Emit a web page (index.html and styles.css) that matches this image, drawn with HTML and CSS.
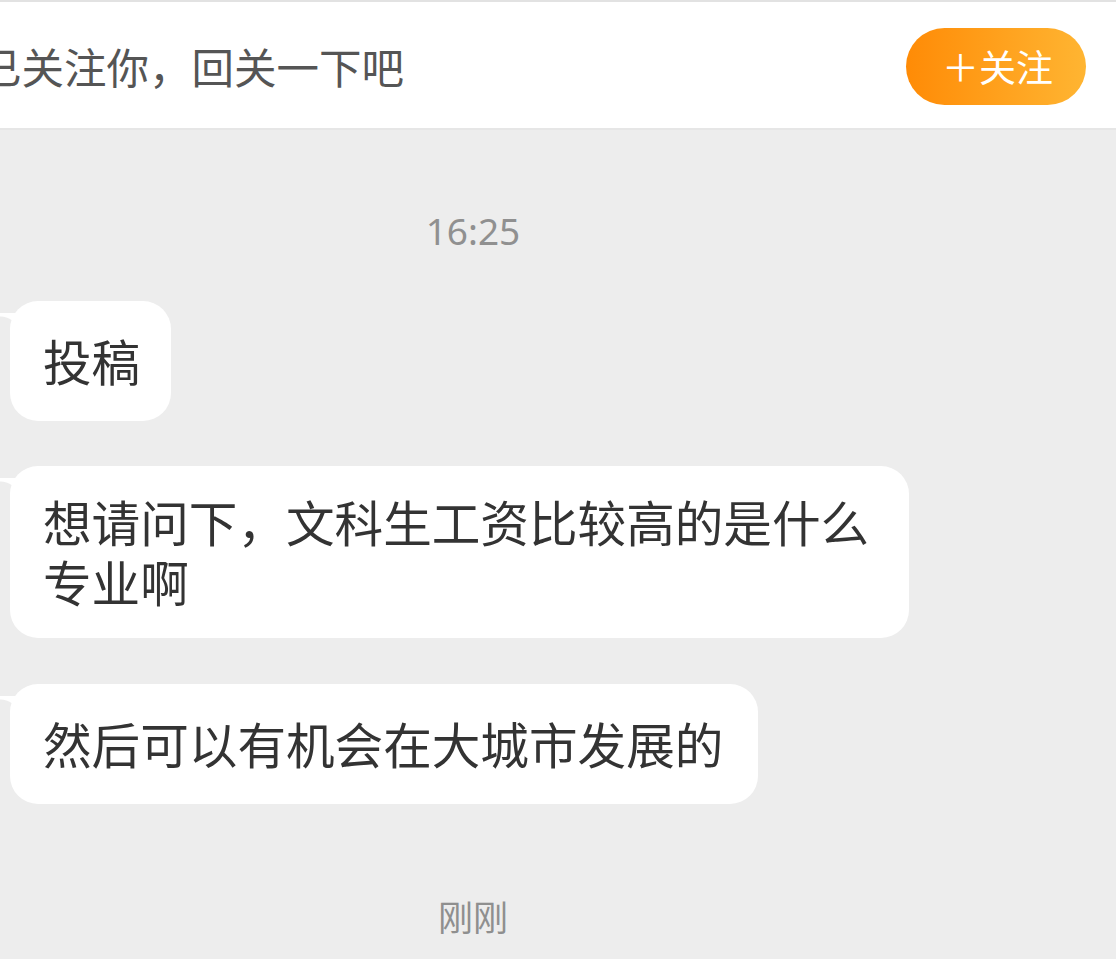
FILE: index.html
```html
<!DOCTYPE html>
<html lang="zh-CN">
<head>
    <meta charset="UTF-8">
    <meta name="viewport" content="width=device-width, initial-scale=1.0">
    <title>私信</title>
    <link rel="stylesheet" href="styles.css">
</head>
<body>
    <div class="follow-bar">
        <p class="follow-tip">已关注你，回关一下吧</p>
        <button class="follow-btn">＋关注</button>
    </div>

    <div class="chat">
        <div class="time">16:25</div>

        <div class="bubble">投稿</div>
        <div class="bubble bubble-wrap">想请问下，文科生工资比较高的是什么<br>专业啊</div>
        <div class="bubble bubble-last">然后可以有机会在大城市发展的</div>

        <div class="time time-bottom">刚刚</div>
    </div>
</body>
</html>
```

FILE: styles.css
```css
html, body { margin: 0; padding: 0; }
body { background: #ededed; font-family: "Noto Sans CJK SC", "Noto Sans", sans-serif; overflow: hidden; }

.follow-bar {
    height: 126px;
    background: #fff;
    border-top: 2px solid #e2e2e2;
    border-bottom: 2px solid #e6e6e6;
    display: flex;
    align-items: center;
    justify-content: space-between;
    padding-right: 30px;
    overflow: hidden;
}
.follow-tip { margin: 0 0 0 -21px; font-size: 42.5px; color: #555; white-space: nowrap; }
.follow-btn {
    width: 180px;
    height: 77px;
    border: none;
    border-radius: 39px;
    background: linear-gradient(90deg, #ff8b06, #ffb532);
    color: #fff;
    font-family: inherit;
    font-size: 37px;
    padding: 0 0 0 3px;
    margin-top: 2px;
}

.chat { display: flex; flex-direction: column; align-items: flex-start; padding: 0 0 0 10px; }
.time {
    width: 926px;
    text-align: center;
    margin: 76px 0 45px 0;
    font-family: "Noto Sans", sans-serif;
    font-size: 37px;
    line-height: 50px;
    color: #909090;
}
.time-bottom { margin: 87px 0 0 0; font-family: "Noto Sans CJK SC", sans-serif; font-size: 35px; color: #8f8f8f; }

.bubble {
    position: relative;
    background: #fff;
    border-radius: 28px;
    padding: 29px 31px 29px 33px;
    min-height: 120px;
    box-sizing: border-box;
    font-size: 48.6px;
    line-height: 60px;
    color: #333;
    margin-bottom: 45px;
}
.bubble-wrap { padding: 25px 40px 27px 33px; margin-bottom: 46px; }
.bubble-last { margin-bottom: 0; padding-right: 35px; }
.bubble::before {
    content: "";
    position: absolute;
    left: -10px;
    top: 12px;
    width: 20px;
    height: 24px;
    background: radial-gradient(circle at 0 100%, transparent 20px, #fff 21px);
}
```
